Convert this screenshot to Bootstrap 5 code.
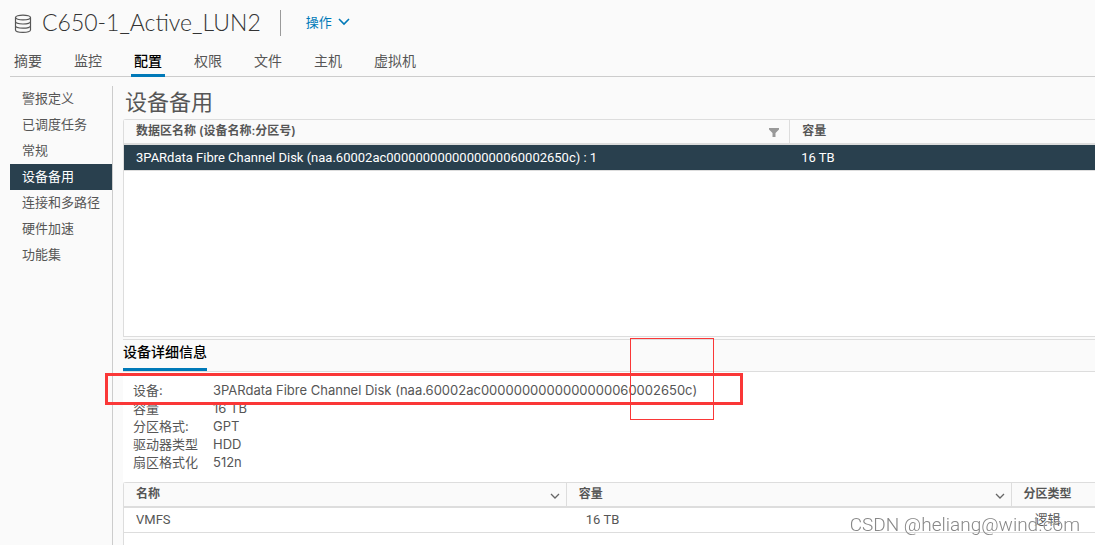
<!DOCTYPE html>
<html lang="zh-CN">
<head>
<meta charset="utf-8">
<meta name="viewport" content="width=device-width, initial-scale=1">
<title>C650-1_Active_LUN2</title>
<link href="https://cdn.jsdelivr.net/npm/bootstrap@5.3.0/dist/css/bootstrap.min.css" rel="stylesheet">
<style>
body{background:#fafafa;color:#565656;font:13px/18px "Inter","Noto Sans CJK SC",sans-serif;overflow-x:hidden}
a{color:inherit;text-decoration:none}
.object-head{height:47px;padding:0 13px 2px}
.object-title{font-size:23px;line-height:28px;font-weight:300;color:#333;margin:0 0 2px 9px;font-family:"Lato","Noto Sans CJK SC",sans-serif}
.head-rule{width:1px;height:26px;background:#9a9a9a;margin:0 25px 0 19px}
.action-btn{border:0;background:none;padding:0 0 2px;color:#0079b8;gap:6px}
.main-tabs{margin-left:10px;border-bottom:1px solid #ccc;gap:26px;font-size:14px;height:30px;padding-left:1px}
.main-tabs a{padding:5px 3px 0;height:30px;border-bottom:3px solid transparent;line-height:18px}
.main-tabs a.active{color:#000;border-color:#0079b8;font-weight:500}
.side-menu{width:103px;margin:9px 10px 0;border-right:1px solid #ccc;flex:none}
.side-menu a{padding:3px 12px 5px;height:26px;color:#565656}
.side-menu a.active{background:#29404e;color:#fff}
.work-title{font-size:22px;line-height:34px;font-weight:400;margin:0;padding:0 2px;color:#565656}
.frame-grid{height:218px;background:#fff;border:1px solid #ddd;border-right:0;border-radius:3px 0 0 0}
.data-grid{width:100%;table-layout:fixed;border-collapse:separate;border-spacing:0}
.data-grid th{background:#fafafa;height:25px;border-bottom:2px solid #ddd;font-size:12px;font-weight:600;padding:0 6px 2px 12px;line-height:18px}
.data-grid th+th{border-left:1px solid #ddd}
.data-grid td{height:26px;border-bottom:1px solid #ddd;padding:0 12px;white-space:nowrap;font-family:"Roboto","Noto Sans CJK SC",sans-serif}
.picked td{background:#29404e;color:#fff}
.detail-tabs{margin-top:2px;height:33px;border:solid #ddd;border-width:1px 0;background:#fafafa}
.detail-tabs a{display:inline-block;height:31px;padding-top:3px;font-size:14px;font-weight:500;color:#000;border-bottom:3px solid #0079b8}
.details{background:#fff;min-height:110px}
.details dl{display:grid;grid-template-columns:80px 1fr;margin:0;padding:9px 10px}
.details dt{font-weight:400}
.details dd{margin:0}
.part-grid{border:1px solid #ddd;border-width:1px 0 0 1px;background:#fff;border-radius:3px 0 0 0}
.part-grid td{height:25px;padding-bottom:1px}
.part-grid td+td{padding-left:20px}
.part-grid td:last-child{padding-left:24px}
.mark-wide{left:-18px;top:1px;width:638px;height:32px;border:3px solid #fa3737;pointer-events:none}
.mark-thin{left:507px;top:-34px;width:84px;height:82px;border:1px solid #fa3737;pointer-events:none}
.watermark{right:15px;bottom:8px;font:300 19px/24px "Roboto",sans-serif;color:#888;text-shadow:0 0 1px #fff}
</style>
</head>
<body class="min-vh-100 d-flex flex-column">
<header>
  <div class="object-head d-flex align-items-center">
    <svg width="20" height="20" viewBox="0 0 20 20" fill="none" stroke="#565656" stroke-width="1.2"><ellipse cx="10" cy="4.500" rx="7.500" ry="2.400"/><path d="M2.500 4.500v12.500c0 1.500 3 2.400 7.500 2.400s7.500-.9 7.500-2.400V4.500M2.500 8.600c0 1.500 3 2.400 7.500 2.400s7.500-.9 7.500-2.400M2.500 12.800c0 1.500 3 2.400 7.500 2.400s7.500-.9 7.500-2.400"/></svg>
    <h1 class="object-title">C650-1_Active_LUN2</h1>
    <span class="head-rule"></span>
    <button class="action-btn d-flex align-items-center" type="button">操作
      <svg width="12" height="8" viewBox="0 0 12 8" fill="none" stroke="#0079b8" stroke-width="1.600"><path d="M1 1l5 5 5-5"/></svg></button>
  </div>
  <nav class="main-tabs d-flex">
    <a href="#">摘要</a><a href="#">监控</a><a href="#" class="active">配置</a><a href="#">权限</a><a href="#">文件</a><a href="#">主机</a><a href="#">虚拟机</a>
  </nav>
</header>
<div class="d-flex flex-grow-1">
  <nav class="side-menu d-flex flex-column">
    <a href="#">警报定义</a><a href="#">已调度任务</a><a href="#">常规</a><a href="#" class="active">设备备用</a><a href="#">连接和多路径</a><a href="#">硬件加速</a><a href="#">功能集</a>
  </nav>
  <main class="flex-grow-1 d-flex flex-column pt-2">
    <h2 class="work-title">设备备用</h2>
    <div class="frame-grid">
      <table class="data-grid">
        <colgroup><col style="width:68.5%"><col></colgroup>
        <thead><tr><th><div class="d-flex justify-content-between align-items-center">数据区名称 (设备名称:分区号)<svg class="mt-1 me-1" width="10" height="9" viewBox="0 0 10 9"><path d="M0 0h10v1.500L6.500 5v4h-3V5L0 1.500z" fill="#999"/></svg></div></th><th>容量</th></tr></thead>
        <tbody><tr class="picked"><td>3PARdata Fibre Channel Disk (naa.60002ac0000000000000000060002650c) : 1</td><td>16 TB</td></tr></tbody>
      </table>
    </div>
    <nav class="detail-tabs"><a href="#">设备详细信息</a></nav>
    <section class="details position-relative">
      <dl>
        <dt>设备:</dt><dd>3PARdata Fibre Channel Disk (naa.60002ac0000000000000000060002650c)</dd>
        <dt>容量</dt><dd>16 TB</dd>
        <dt>分区格式:</dt><dd>GPT</dd>
        <dt>驱动器类型</dt><dd>HDD</dd>
        <dt>扇区格式化</dt><dd>512n</dd>
      </dl>
      <div class="mark-wide position-absolute"></div>
      <div class="mark-thin position-absolute"></div>
    </section>
    <div class="part-grid flex-grow-1">
      <table class="data-grid">
        <colgroup><col style="width:45.5%"><col style="width:45.8%"><col></colgroup>
        <thead><tr>
          <th><div class="d-flex justify-content-between align-items-center">名称<svg class="mt-1" width="10" height="6" viewBox="0 0 10 6" fill="none" stroke="#666" stroke-width="1.300"><path d="M1 1l4 4 4-4"/></svg></div></th>
          <th><div class="d-flex justify-content-between align-items-center">容量<svg class="mt-1" width="10" height="6" viewBox="0 0 10 6" fill="none" stroke="#666" stroke-width="1.300"><path d="M1 1l4 4 4-4"/></svg></div></th>
          <th>分区类型</th></tr></thead>
        <tbody><tr><td>VMFS</td><td>16 TB</td><td>逻辑</td></tr></tbody>
      </table>
    </div>
  </main>
</div>
<div class="watermark position-fixed">CSDN @heliang@wind.com</div>
<script src="https://cdn.jsdelivr.net/npm/bootstrap@5.3.0/dist/js/bootstrap.bundle.min.js"></script>
</body>
</html>
